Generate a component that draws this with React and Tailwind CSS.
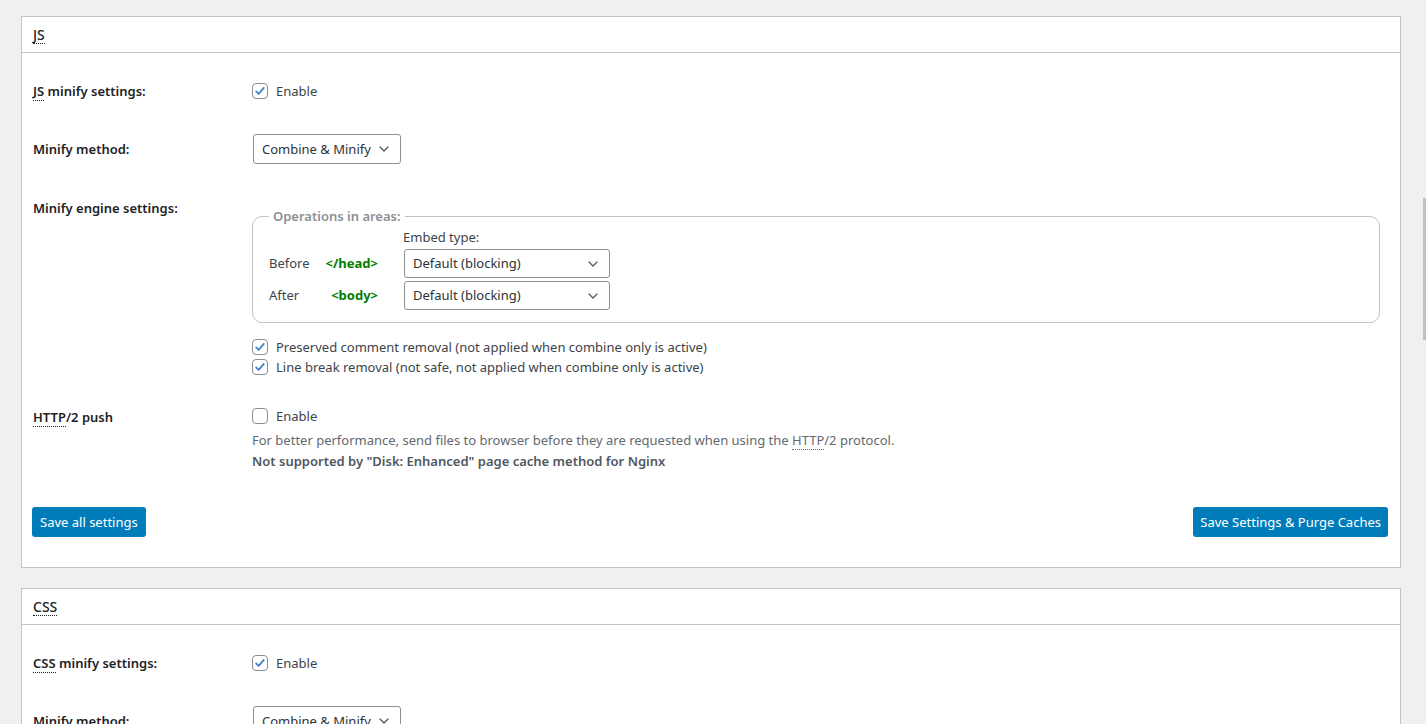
import React from "react";

const font = { fontFamily: '"Noto Sans", "Open Sans", Arial, sans-serif' };

function Check({ checked }) {
  return (
    <span className="inline-flex h-4 w-4 shrink-0 items-center justify-center rounded-[4px] border border-[#8c8f94] bg-white">
      {checked && (
        <svg viewBox="0 0 20 20" className="h-[18px] w-[18px]">
          <path d="M4.5 10.5l3.6 3.6 7.4-8.6" fill="none" stroke="#3582c4" strokeWidth="2.4" strokeLinecap="round" strokeLinejoin="round" />
        </svg>
      )}
    </span>
  );
}

function Select({ value, className = "" }) {
  return (
    <div className={`flex items-center justify-between rounded-[3px] border border-[#8c8f94] bg-white pl-2 pr-2 text-[#2c3338] ${className}`}>
      <span>{value}</span>
      <svg viewBox="0 0 20 20" className="h-4 w-4">
        <path d="M5 7.5l5 5 5-5" fill="none" stroke="#50575e" strokeWidth="1.6" strokeLinecap="round" strokeLinejoin="round" />
      </svg>
    </div>
  );
}

function Abbr({ children }) {
  return <abbr className="no-underline border-b border-dotted border-[#1d2327]">{children}</abbr>;
}

function CheckRow({ checked, label }) {
  return (
    <div className="flex h-5 items-center gap-2 text-[#3c434a]">
      <Check checked={checked} />
      <span>{label}</span>
    </div>
  );
}

function Card({ title, children }) {
  return (
    <div className="border border-[#c3c4c7] bg-white">
      <div className="flex h-[36px] items-center border-b border-[#c3c4c7] px-[11px] text-[14px] font-medium text-[#1d2327]">
        <Abbr>{title}</Abbr>
      </div>
      <div className="px-[11px]">{children}</div>
    </div>
  );
}

function Label({ children, className = "" }) {
  return <div className={`w-[219px] shrink-0 font-semibold text-[#1d2327] ${className}`}>{children}</div>;
}

export default function App() {
  return (
    <div className="min-h-screen bg-[#f0f0f1] pl-[21px] pr-[25px] pt-4 text-[13px] leading-[17px]" style={font}>
      <Card title="JS">
        <div className="mt-[30px] flex h-4 items-center">
          <Label><Abbr>JS</Abbr> minify settings:</Label>
          <div className="flex items-center gap-2 text-[#3c434a]">
            <Check checked />
            <span>Enable</span>
          </div>
        </div>

        <div className="mt-[35px] flex h-[30px] items-center">
          <Label>Minify method:</Label>
          <Select value="Combine & Minify" className="ml-[1px] h-[30px] w-[148px]" />
        </div>

        <div className="mt-[36px] flex items-start">
          <Label>Minify engine settings:</Label>
          <div className="flex-1 pr-[9px] pt-2">
            <fieldset className="rounded-[10px] border border-[#c3c4c7] pb-[12px] pl-4">
              <legend className="px-1 font-semibold text-[#8c8f94]">Operations in areas:</legend>
              <div className="flex flex-col">
                <div className="mt-[4px] pl-[134px] text-[#3c434a]">Embed type:</div>
                <div className="mt-[3px] flex h-[29px] items-center text-[#3c434a]">
                  <span className="w-[40px]">Before</span>
                  <code className="w-[69px] text-right font-bold text-[#008000]" style={font}>&lt;/head&gt;</code>
                  <Select value="Default (blocking)" className="ml-[26px] h-[29px] w-[206px]" />
                </div>
                <div className="mt-[3px] flex h-[29px] items-center text-[#3c434a]">
                  <span className="w-[40px]">After</span>
                  <code className="w-[69px] text-right font-bold text-[#008000]" style={font}>&lt;body&gt;</code>
                  <Select value="Default (blocking)" className="ml-[26px] h-[29px] w-[206px]" />
                </div>
              </div>
            </fieldset>
            <div className="mt-[14px] flex flex-col">
              <CheckRow checked label="Preserved comment removal (not applied when combine only is active)" />
              <CheckRow checked label="Line break removal (not safe, not applied when combine only is active)" />
            </div>
          </div>
        </div>

        <div className="mt-[31px] flex items-start">
          <Label className="pt-[1px]"><Abbr>HTTP</Abbr>/2 push</Label>
          <div className="flex flex-col">
            <div className="flex h-4 items-center gap-2 text-[#3c434a]">
              <Check />
              <span>Enable</span>
            </div>
            <div className="mt-[8px] text-[#646970]">
              For better performance, send files to browser before they are requested when using the <abbr className="no-underline border-b border-dotted border-[#646970]">HTTP</abbr>/2 protocol.
            </div>
            <div className="mt-[4px] font-semibold text-[#50575e]">Not supported by "Disk: Enhanced" page cache method for Nginx</div>
          </div>
        </div>

        <div className="mt-[37px] mb-[30px] flex items-center justify-between">
          <button className="ml-[-1px] h-[30px] rounded-[3px] bg-[#007cba] px-[8px] text-white" style={font}>Save all settings</button>
          <button className="mr-[1px] h-[30px] rounded-[3px] bg-[#007cba] px-[7px] text-white" style={font}>Save Settings &amp; Purge Caches</button>
        </div>
      </Card>

      <div className="h-5" />

      <Card title="CSS">
        <div className="mt-[30px] flex h-4 items-center">
          <Label><Abbr>CSS</Abbr> minify settings:</Label>
          <div className="flex items-center gap-2 text-[#3c434a]">
            <Check checked />
            <span>Enable</span>
          </div>
        </div>
        <div className="mt-[35px] flex h-[30px] items-center">
          <Label>Minify method:</Label>
          <Select value="Combine & Minify" className="ml-[1px] h-[30px] w-[148px]" />
        </div>
        <div className="h-[200px]" />
      </Card>

      <div className="fixed right-0 top-[198px] h-[142px] w-[3px] bg-[#c1c1c1]" />
    </div>
  );
}
